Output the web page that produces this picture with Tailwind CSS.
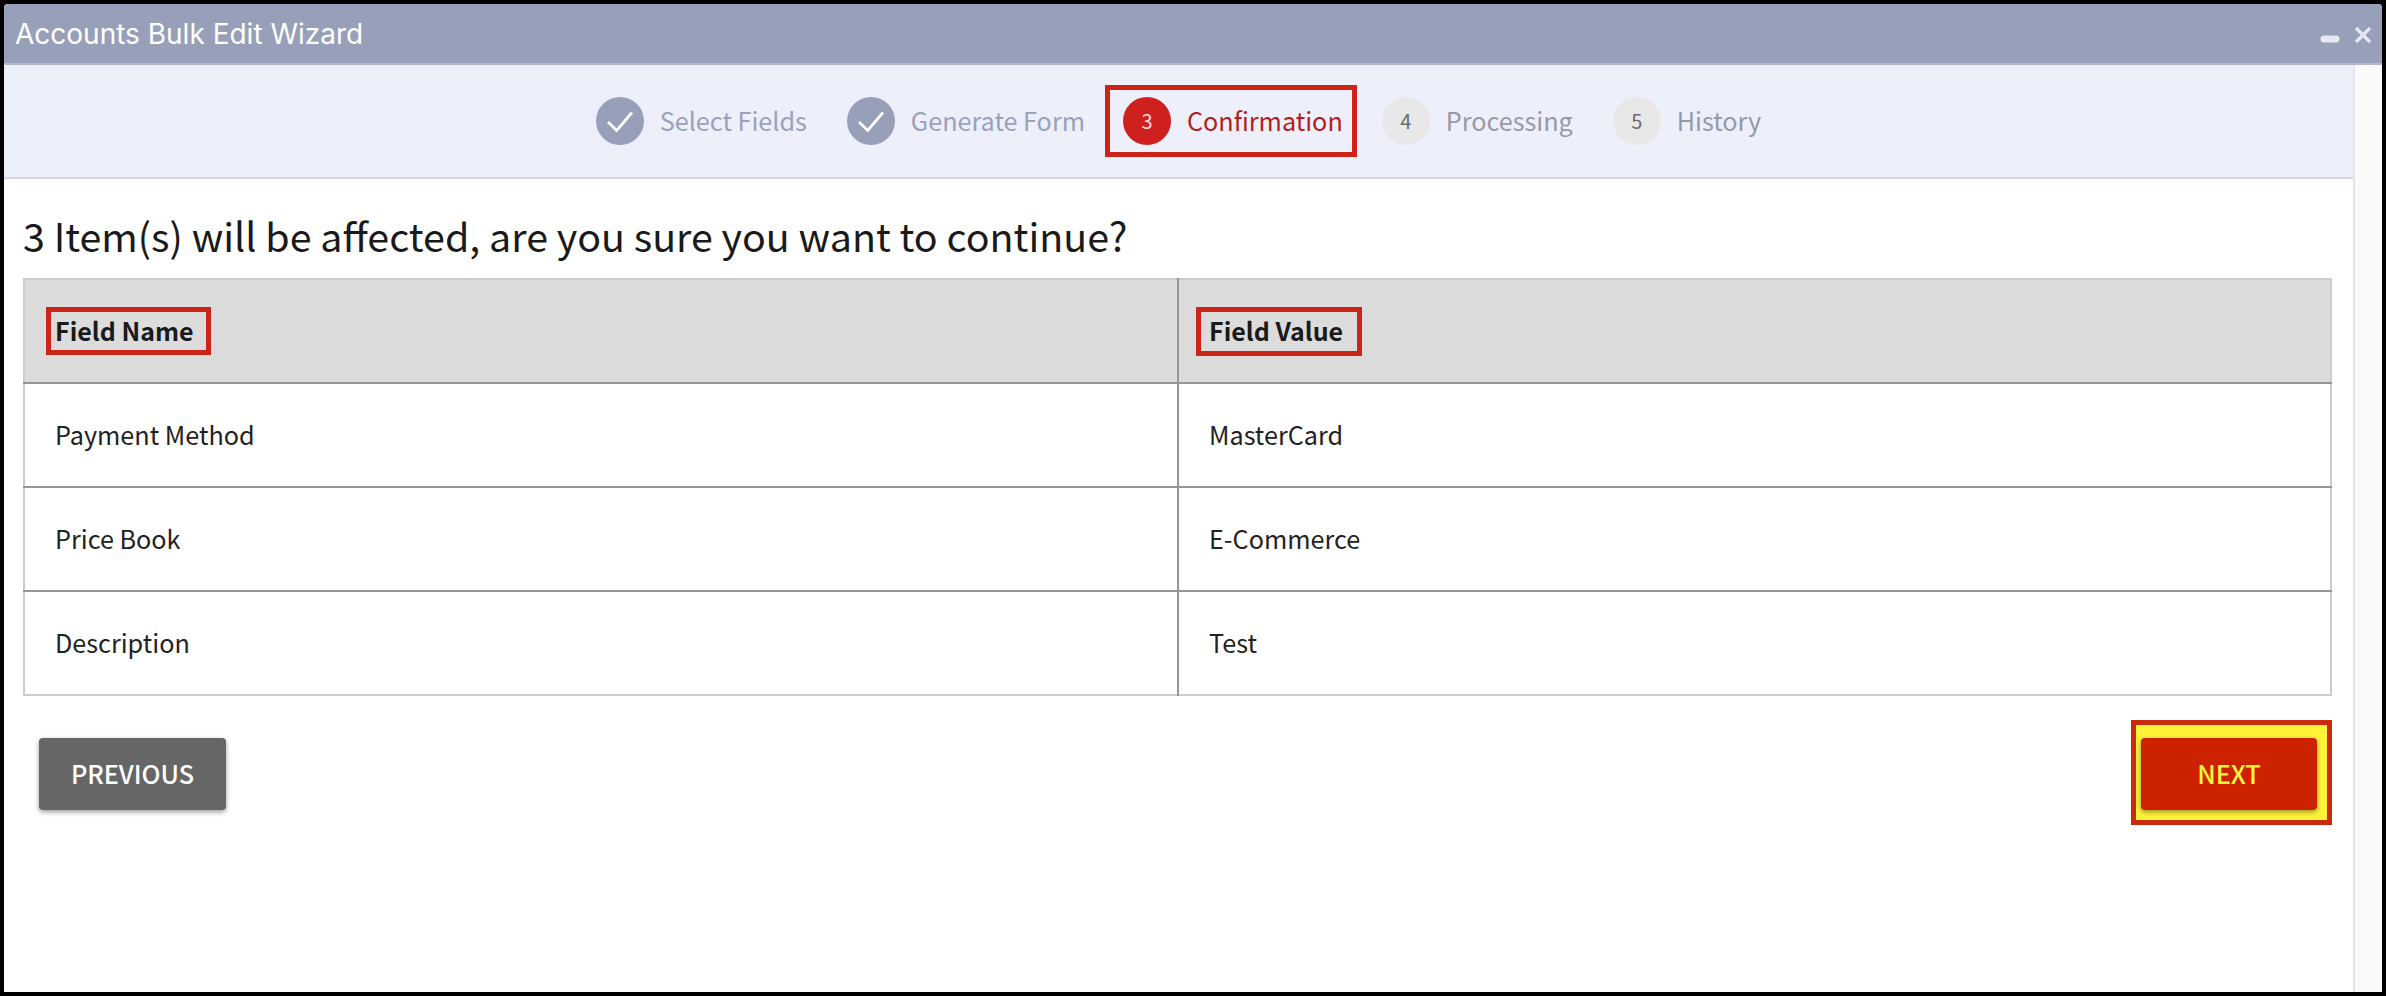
<!DOCTYPE html>
<html lang="en">
<head>
  <meta charset="UTF-8">
  <title>Accounts Bulk Edit Wizard</title>
  <script src="https://cdn.jsdelivr.net/npm/@tailwindcss/browser@4"></script>
</head>
<body class="h-screen overflow-hidden bg-black p-1 font-['Noto_Sans_CJK_SC','Noto_Sans',sans-serif] text-[#1a1a1a]">
  <div class="flex h-full flex-col overflow-hidden rounded-t-[4px] bg-white">
    <!-- title bar -->
    <header class="flex h-[61px] items-center justify-between border-b-2 border-[#b4b8c8] bg-[#979fb9] pl-[11px] pr-[10px] text-white">
      <h1 class="font-['Inter',sans-serif] text-[28px] leading-none">Accounts Bulk Edit Wizard</h1>
      <div class="flex items-center gap-[14px] pt-[2px]">
        <svg class="mt-[9px]" width="20" height="8" viewBox="0 0 20 8"><rect x="0.5" y="0.5" width="19" height="7" rx="3.5" fill="#e6e9f2"/></svg>
        <svg width="18" height="18" viewBox="0 0 18 18"><path d="M2 2L16 16M16 2L2 16" stroke="#e6e9f2" stroke-width="3.2"/></svg>
      </div>
    </header>

    <div class="flex min-h-0 flex-1">
      <main class="min-w-0 flex-1">
        <!-- steps -->
        <nav class="flex h-[114px] items-center justify-center border-b-2 border-[#d6d6e0] bg-[#edf0fb] text-[25.2px] leading-none">
          <div class="flex items-center gap-4 text-[#9aa1b9]">
            <span class="flex size-12 items-center justify-center rounded-full bg-[#979fb9]">
              <svg width="28" height="28" viewBox="0 0 28 28" fill="none"><path d="M2 15L10.7 23.5L26 5.5" stroke="#fff" stroke-width="2.8"/></svg>
            </span>
            <span>Select Fields</span>
          </div>
          <div class="ml-10 flex items-center gap-4 text-[#9aa1b9]">
            <span class="flex size-12 items-center justify-center rounded-full bg-[#979fb9]">
              <svg width="28" height="28" viewBox="0 0 28 28" fill="none"><path d="M2 15L10.7 23.5L26 5.5" stroke="#fff" stroke-width="2.8"/></svg>
            </span>
            <span>Generate Form</span>
          </div>
          <div class="ml-[20px] flex h-[72px] items-center gap-4 border-[5px] border-[#cc2418] pl-[13px] pr-[9px] text-[#b71c1c]">
            <span class="flex size-12 items-center justify-center rounded-full bg-[#cf2020] text-[20px] text-[#f6dcdc]">3</span>
            <span>Confirmation</span>
          </div>
          <div class="ml-[25px] flex items-center gap-4 text-[#959aa8]">
            <span class="flex size-12 items-center justify-center rounded-full bg-[#e8e8e8] text-[20px] text-[#6b6b6b]">4</span>
            <span>Processing</span>
          </div>
          <div class="ml-10 flex items-center gap-4 text-[#959aa8]">
            <span class="flex size-12 items-center justify-center rounded-full bg-[#e8e8e8] text-[20px] text-[#6b6b6b]">5</span>
            <span>History</span>
          </div>
        </nav>

        <div class="pl-[19px] pr-[21px]">
          <h2 class="flex h-[99px] items-center pt-[13px] text-[39.4px] leading-none text-[#1a1a1a]">3 Item(s) will be affected, are you sure you want to continue?</h2>

          <table class="w-full table-fixed border-collapse border-2 border-[#cccccc] text-[25.2px] text-[#222222]">
            <thead>
              <tr class="h-[104px] bg-[#dcdcdc] text-[25px] text-[#1a1a1a]">
                <th class="w-[1154px] border-r-2 border-b-2 border-[#969696] pl-[30px] text-left font-bold">
                  <span class="-ml-[9px] inline-flex h-[48px] w-[165px] items-center border-[5px] border-[#cc2418] pl-[4px]">Field Name</span>
                </th>
                <th class="border-b-2 border-[#969696] pl-[30px] text-left font-bold">
                  <span class="-ml-[13px] inline-flex h-[49px] w-[166px] items-center border-[5px] border-[#cc2418] pl-[8px]">Field Value</span>
                </th>
              </tr>
            </thead>
            <tbody>
              <tr class="h-[104px] border-b-2 border-[#969696]">
                <td class="border-r-2 border-[#969696] pl-[30px]">Payment Method</td>
                <td class="pl-[30px]">MasterCard</td>
              </tr>
              <tr class="h-[104px] border-b-2 border-[#969696]">
                <td class="border-r-2 border-[#969696] pl-[30px]">Price Book</td>
                <td class="pl-[30px]">E-Commerce</td>
              </tr>
              <tr class="h-[104px]">
                <td class="border-r-2 border-[#969696] pl-[30px]">Description</td>
                <td class="pl-[30px]">Test</td>
              </tr>
            </tbody>
          </table>

          <div class="mt-[24px] flex items-start justify-between pl-[16px]">
            <button class="mt-[18px] flex h-[72px] w-[187px] items-center justify-center rounded-[4px] bg-[#666666] text-[25.2px] font-medium text-white shadow-[0_2px_5px_rgba(0,0,0,0.4)]">PREVIOUS</button>
            <div class="border-[5px] border-[#cc2a0e] bg-[#fff33a] pb-[10px] pl-[5px] pr-[10px] pt-[13px]">
              <button class="flex h-[72px] w-[176px] items-center justify-center rounded-[4px] bg-[#cc2200] text-[25.2px] font-medium text-[#fff33a] shadow-[0_2px_5px_rgba(0,0,0,0.4)]">NEXT</button>
            </div>
          </div>
        </div>
      </main>

      <!-- scrollbar track -->
      <div class="w-[29px] shrink-0 border-l-2 border-[#e6e6e6] bg-[#fafafa]"></div>
    </div>
  </div>
</body>
</html>
